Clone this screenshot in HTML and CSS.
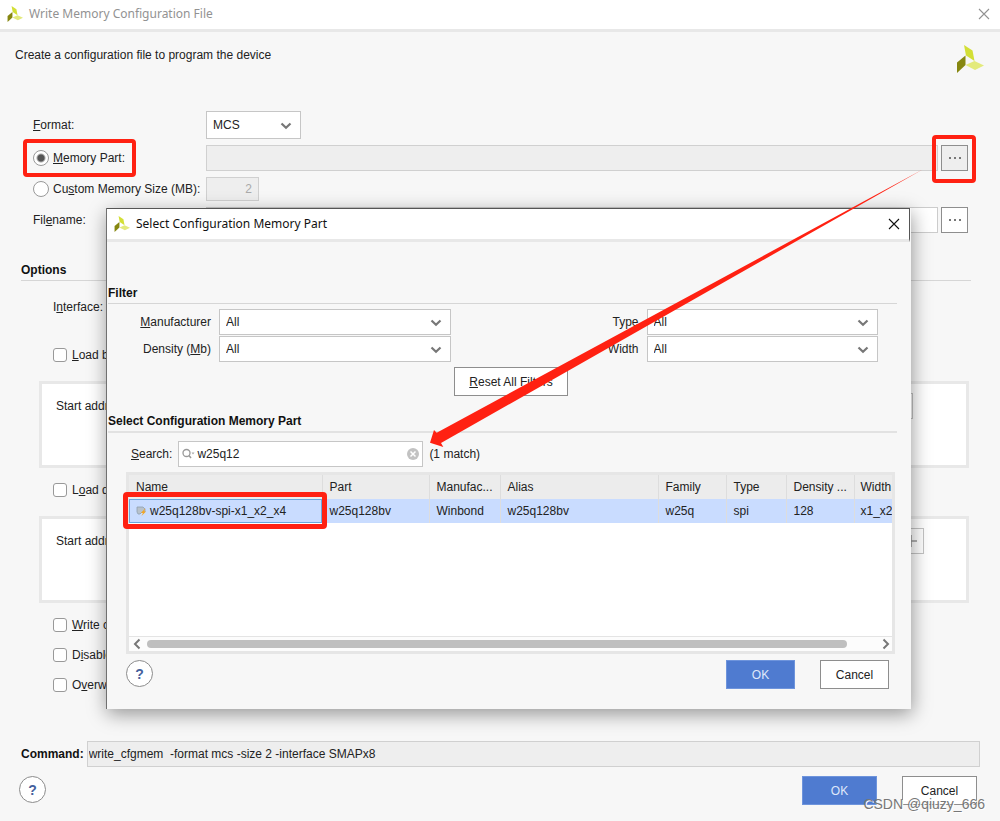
FILE: index.html
```html
<!DOCTYPE html>
<html lang="en">
<head>
<meta charset="utf-8">
<title>Write Memory Configuration File</title>
<link rel="stylesheet" href="styles.css">
</head>
<body>
<svg class="defs" aria-hidden="true">
  <symbol id="logo" viewBox="0 0 28 28"><path d="M8 0l8.500 5.500 2 10.500L10 10.500z" fill="#d3df36"/><path d="M9.500 10.500v9.500L1 28V17.500z" fill="#868710"/><path d="M9.500 20l9-4L28 20.500 19 25z" fill="#e3ea7c"/></symbol>
  <symbol id="chevron" viewBox="0 0 12 8"><path d="M1.500 1.500L6 5.800l4.500-4.300" fill="none" stroke="#777" stroke-width="2.200"/></symbol>
  <symbol id="close" viewBox="0 0 12 12"><path d="M1 1l10 10M11 1L1 11" fill="none" stroke="currentColor" stroke-width="1.100"/></symbol>
  <symbol id="dots" viewBox="0 0 14 4"><path d="M1 1h2v2H1zM6 1h2v2H6zM11 1h2v2h-2z" fill="#777"/></symbol>
</svg>

<main class="window">
  <header class="titlebar">
    <svg class="title-logo"><use href="#logo"/></svg>
    <h1 class="title">Write Memory Configuration File</h1>
    <button class="close" aria-label="Close"><svg><use href="#close"/></svg></button>
  </header>

  <div class="intro">
    <p>Create a configuration file to program the device</p>
    <svg class="brand"><use href="#logo"/></svg>
  </div>

  <form class="file-form">
    <label for="format"><u>F</u>ormat:</label>
    <span class="select format"><select id="format"><option>MCS</option></select><svg><use href="#chevron"/></svg></span>

    <label class="choice marked"><input type="radio" name="source" checked><span><u>M</u>emory Part:</span></label>
    <div class="field-row">
      <input class="text disabled" aria-label="Memory part" disabled>
      <span class="marked browse-mark"><button type="button" class="browse grey" aria-label="Browse memory part"><svg><use href="#dots"/></svg></button></span>
    </div>

    <label class="choice"><input type="radio" name="source"><span>Cu<u>s</u>tom Memory Size (MB):</span></label>
    <input class="text disabled size" aria-label="Custom memory size" value="2" disabled>

    <label for="filename">Fil<u>e</u>name:</label>
    <div class="field-row">
      <input class="text" id="filename">
      <button type="button" class="browse" aria-label="Browse file"><svg><use href="#dots"/></svg></button>
    </div>
  </form>

  <section class="options">
    <h2 class="section-title">Options</h2>
    <p class="interface">I<u>n</u>terface:</p>
    <label class="check"><input type="checkbox"><span><u>L</u>oad bitstream</span></label>
    <div class="panel"><span>Start address</span><button type="button" class="add first" aria-label="Add bitstream"></button></div>
    <label class="check"><input type="checkbox"><span>L<u>o</u>ad data</span></label>
    <div class="panel"><span>Start address</span><button type="button" class="add" aria-label="Add data file"><svg viewBox="0 0 12 12"><path d="M6 0v12M0 6h12" stroke="#999" stroke-width="1.500"/></svg></button></div>
    <div class="checks">
      <label class="check"><input type="checkbox"><span><u>W</u>rite checksum</span></label>
      <label class="check"><input type="checkbox"><span>D<u>i</u>sable</span></label>
      <label class="check"><input type="checkbox"><span>O<u>v</u>erwrite</span></label>
    </div>
  </section>

  <div class="command">
    <label for="command">Command:</label>
    <input class="text disabled" id="command" readonly value="write_cfgmem  -format mcs -size 2 -interface SMAPx8">
  </div>

  <footer class="actions outer">
    <button class="help" aria-label="Help">?</button>
    <button class="btn primary">OK</button>
    <button class="btn">Cancel</button>
  </footer>
  <span class="watermark">CSDN @qiuzy_666</span>

  <section class="dialog" role="dialog" aria-labelledby="dialog-title">
    <header class="titlebar dialog-bar">
      <svg class="title-logo"><use href="#logo"/></svg>
      <h1 class="title" id="dialog-title">Select Configuration Memory Part</h1>
      <button class="close" aria-label="Close"><svg><use href="#close"/></svg></button>
    </header>
    <div class="dialog-body">
      <h2 class="section-title">Filter</h2>
      <div class="filters">
        <label for="maker"><u>M</u>anufacturer</label>
        <span class="select"><select id="maker"><option>All</option></select><svg><use href="#chevron"/></svg></span>
        <label for="type">Type</label>
        <span class="select"><select id="type"><option>All</option></select><svg><use href="#chevron"/></svg></span>
        <label for="density">Density (<u>M</u>b)</label>
        <span class="select"><select id="density"><option>All</option></select><svg><use href="#chevron"/></svg></span>
        <label for="width">Width</label>
        <span class="select"><select id="width"><option>All</option></select><svg><use href="#chevron"/></svg></span>
      </div>
      <button class="btn reset"><span><u>R</u>eset All Filters</span></button>
      <h2 class="section-title thick">Select Configuration Memory Part</h2>
      <div class="search-row">
        <label for="search"><u>S</u>earch:</label>
        <span class="search">
          <svg class="lens" viewBox="0 0 13 12"><circle cx="4.500" cy="5" r="3.500" fill="none" stroke="#999" stroke-width="1.300"/><path d="M7 7.500L9 10" stroke="#999" stroke-width="1.500"/><path d="M9.500 4.500h3L11 6.500z" fill="#aaa"/></svg>
          <input id="search" value="w25q12">
          <button class="clear" aria-label="Clear search"><svg viewBox="0 0 12 12"><circle cx="6" cy="6" r="6" fill="#c2c2c2"/><path d="M3.500 3.500l5 5M8.500 3.500l-5 5" stroke="#fff" stroke-width="1.500"/></svg></button>
        </span>
        <span>(1 match)</span>
      </div>
      <div class="table-frame">
        <div class="table-scroll">
          <table>
            <colgroup><col class="c-name"><col class="c-part"><col class="c-maker"><col class="c-alias"><col class="c-family"><col class="c-type"><col class="c-density"><col class="c-width"></colgroup>
            <thead><tr><th>Name</th><th>Part</th><th>Manufac...</th><th>Alias</th><th>Family</th><th>Type</th><th>Density ...</th><th>Width</th></tr></thead>
            <tbody><tr>
              <td class="current"><span class="part-name"><svg viewBox="0 0 10 10"><path d="M1 1h6l2 2v3H6L4 8H2L1 6z" fill="#b8c2cc" stroke="#8f9fae" stroke-width=".8"/><path d="M9.500 2L5 7h2L5.500 10 10 5.500H8z" fill="#f5a623"/></svg>w25q128bv-spi-x1_x2_x4</span></td>
              <td>w25q128bv</td><td>Winbond</td><td>w25q128bv</td><td>w25q</td><td>spi</td><td>128</td><td>x1_x2</td>
            </tr></tbody>
          </table>
        </div>
        <div class="scrollbar">
          <svg viewBox="0 0 8 12"><path d="M6.500 1.500L2 6l4.500 4.500" fill="none" stroke="#777" stroke-width="2"/></svg>
          <div class="track"><div class="thumb"></div></div>
          <svg viewBox="0 0 8 12"><path d="M1.500 1.500L6 6l-4.500 4.500" fill="none" stroke="#777" stroke-width="2"/></svg>
        </div>
        <div class="row-mark"></div>
      </div>
      <footer class="actions">
        <button class="help" aria-label="Help">?</button>
        <button class="btn primary">OK</button>
        <button class="btn">Cancel</button>
      </footer>
    </div>
  </section>

  <svg class="arrow" viewBox="0 0 496 278" aria-hidden="true"><path d="M493.500 -1L11 273L13.300 277L0 272.700L4 260L6.700 262.700z" fill="#ff2112"/></svg>
</main>
</body>
</html>
```
FILE: styles.css
```css
* { box-sizing: border-box; }
body {
  margin: 0;
  background: #f7f7f7;
  color: #222;
  font: 12px/16px "Liberation Sans", Arial, sans-serif;
}
h1, h2, p { margin: 0; font-size: 12px; }
button, input, select { font: inherit; color: inherit; margin: 0; }
button { padding: 0; }
.defs { position: absolute; width: 0; height: 0; }
.window { position: relative; min-height: 100vh; }

.titlebar {
  display: flex;
  align-items: center;
  height: 32px;
  padding: 0 10px 2px 7px;
  gap: 6px;
  background: #fff;
  border-bottom: 3px solid #e8e8e8;
  color: #929292;
}
.title { flex: 1; font: 12px/16px "Noto Sans", "Open Sans", sans-serif; }
.title-logo { width: 16px; height: 16px; }
.close { display: flex; border: 0; background: none; }
.close svg { width: 12px; height: 12px; }

.intro {
  display: flex;
  justify-content: space-between;
  padding: 13px 16px 0 15px;
}
.intro p { line-height: 20px; }
.brand { width: 28px; height: 28px; }

.file-form {
  display: grid;
  grid-template-columns: 173px 1fr;
  grid-template-rows: 28px 26px 24px 26px;
  row-gap: 6px;
  align-items: center;
  padding: 38px 32px 0 33px;
}
.field-row { display: flex; gap: 3px; }
.text {
  flex: 1;
  min-width: 0;
  height: 26px;
  padding: 0 3px;
  border: 1px solid #ccc;
  background: #fff;
}
.text.disabled { background: #eee; border-color: #d0d0d0; }
.size { width: 53px; height: 24px; padding-right: 6px; text-align: right; color: #aaa; }
.browse {
  display: grid;
  place-items: center;
  width: 27px;
  height: 26px;
  border: 1px solid #8e8e8e;
  background: #fff;
}
.browse.grey { background: #eee; }
.browse svg { width: 14px; height: 4px; }
.choice { display: flex; align-items: center; gap: 4px; white-space: nowrap; }
.choice input, .check input { appearance: none; flex: none; background: #fff; border: 1px solid #999; }
.choice input { width: 16px; height: 16px; border-radius: 50%; }
.choice input:checked { background: radial-gradient(circle, #555 0 3px, #fff 5px); }
.marked { position: relative; justify-self: start; }
.marked::after {
  content: "";
  position: absolute;
  inset: -11px -11px -11px -10px;
  border: 4px solid #ff2112;
  border-radius: 4px;
}
.browse-mark::after { inset: -10px -8px -12px -9px; }

.select { position: relative; display: block; height: 26px; }
.select select {
  appearance: none;
  width: 100%;
  height: 100%;
  padding: 0 6px;
  border: 1px solid #c6c6c6;
  border-radius: 0;
  background: #fff;
}
.select svg { position: absolute; right: 9px; top: 50%; margin-top: -3px; width: 12px; height: 8px; pointer-events: none; }
.format { width: 95px; height: 28px; }

.section-title {
  padding-bottom: 2px;
  border-bottom: 1px solid #d6d6d6;
  color: #111;
  font-weight: bold;
}
.section-title.thick { border-width: 2px; border-color: #e2e2e2; }
.options { padding: 29px 29px 0 21px; }
.interface { padding: 18px 0 0 32px; }
.check { display: flex; align-items: center; gap: 5px; padding-left: 32px; }
.check input { width: 14px; height: 14px; border-radius: 3px; }
.options > .check { margin-top: 32px; }
.panel {
  display: flex;
  justify-content: space-between;
  height: 87px;
  margin: 18px 2px 0 18px;
  padding: 9px 42px 0 14px;
  border: 3px solid #e8e8e8;
  background: #fff;
}
.panel > span { padding-top: 5px; }
.options > .panel + .check { margin-top: 14px; }
.add { display: grid; place-items: center; width: 26px; height: 26px; border: 1px solid #c4c4c4; background: #fff; }
.add.first { margin-right: 11px; }
.add svg { width: 12px; height: 12px; }
.checks { display: grid; gap: 14px; margin-top: 14px; }

.command { display: flex; align-items: center; gap: 3px; padding: 48px 20px 0 21px; }
.command label { font-weight: bold; color: #111; }
.command .text { padding: 0 1px; white-space: pre; }
.actions { display: flex; gap: 25px; padding-top: 6px; }
.actions.outer { padding: 9px 23px 0 19px; }
.help {
  width: 27px;
  height: 27px;
  margin-right: auto;
  border: 1px solid #8c8c8c;
  border-radius: 50%;
  background: #fff;
  color: #45619d;
  font-weight: bold;
  font-size: 14px;
}
.btn { width: 69px; height: 29px; border: 1px solid #8e8e8e; background: #fff; }
.outer .btn { width: 75px; }
.btn.primary { background: #4f7bd0; border: 1px solid #6e94dc; color: #dfe8fa; }
.watermark {
  position: absolute;
  right: 15px;
  top: 794px;
  color: #777;
  font: 14px/20px "Liberation Sans", sans-serif;
  text-shadow: 1px 1px 0 #fff;
}

.dialog {
  position: absolute;
  left: 106px;
  right: 89px;
  top: 208px;
  border-left: 1px solid #707070;
  background: #f7f7f7;
  box-shadow: 1px 5px 18px rgba(0, 0, 0, .4);
}
.dialog-bar {
  height: 34px;
  margin-right: 1px;
  padding: 0 9px 1px 7px;
  border-top: 1px solid #555;
  border-right: 1px solid #555;
  color: #111;
}
.dialog-body { padding: 43px 14px 20px 1px; }
.filters {
  display: grid;
  grid-template-columns: 103px 1fr 180px 1fr;
  gap: 1px 8px;
  align-items: center;
  padding: 5px 19px 0 0;
}
.filters label { text-align: right; }
.reset { display: block; width: 114px; margin: 5px auto 17px 346px; }
.search-row { display: flex; align-items: center; gap: 6px; padding: 8px 0 5px 23px; }
.search {
  display: flex;
  align-items: center;
  width: 245px;
  height: 26px;
  padding: 0 3px;
  border: 1px solid #c6c6c6;
  background: #fff;
}
.search input { flex: 1; min-width: 0; padding: 0 2px; border: 0; outline: 0; background: none; }
.lens { width: 13px; height: 12px; }
.clear { display: flex; border: 0; background: none; }
.clear svg { width: 12px; height: 12px; }
.table-frame {
  position: relative;
  margin: 0 2px 0 18px;
  border: 3px solid #e6e6e6;
  background: #fff;
}
.table-scroll { height: 161px; overflow: hidden; }
table { width: 100%; min-width: 763px; table-layout: fixed; border-collapse: collapse; }
.c-name { width: 193px; }
.c-part { width: 107px; }
.c-maker { width: 71px; }
.c-family { width: 68px; }
.c-type { width: 60px; }
.c-density { width: 68px; }
.c-width { width: 38px; }
th, td {
  height: 24px;
  padding: 0 0 0 7px;
  border-right: 1px solid #ddd;
  background: #ececec;
  font-weight: normal;
  text-align: left;
  white-space: nowrap;
}
th:last-child, td:last-child { border-right: 0; padding-left: 6px; }
td { background: #c9dcff; }
td.current { outline: 1px solid #69a7dd; outline-offset: -1px; }
.part-name { display: flex; align-items: center; gap: 4px; }
.part-name svg { width: 10px; height: 10px; }
.scrollbar {
  display: flex;
  align-items: center;
  gap: 6px;
  height: 15px;
  padding: 0 2px 0 4px;
  border-top: 1px solid #e4e4e4;
  background: #fcfcfc;
}
.scrollbar svg { width: 8px; height: 12px; }
.track { flex: 1; }
.thumb { width: 96%; height: 8px; border-radius: 4px; background: #bfbfbf; }
.row-mark {
  position: absolute;
  left: -6px;
  top: 17px;
  width: 204px;
  height: 37px;
  border: 5px solid #ff2112;
  border-radius: 4px;
}
.dialog .actions { padding: 6px 8px 0 18px; }
.arrow { position: absolute; left: 430px; top: 170px; width: 496px; height: 278px; }
```
